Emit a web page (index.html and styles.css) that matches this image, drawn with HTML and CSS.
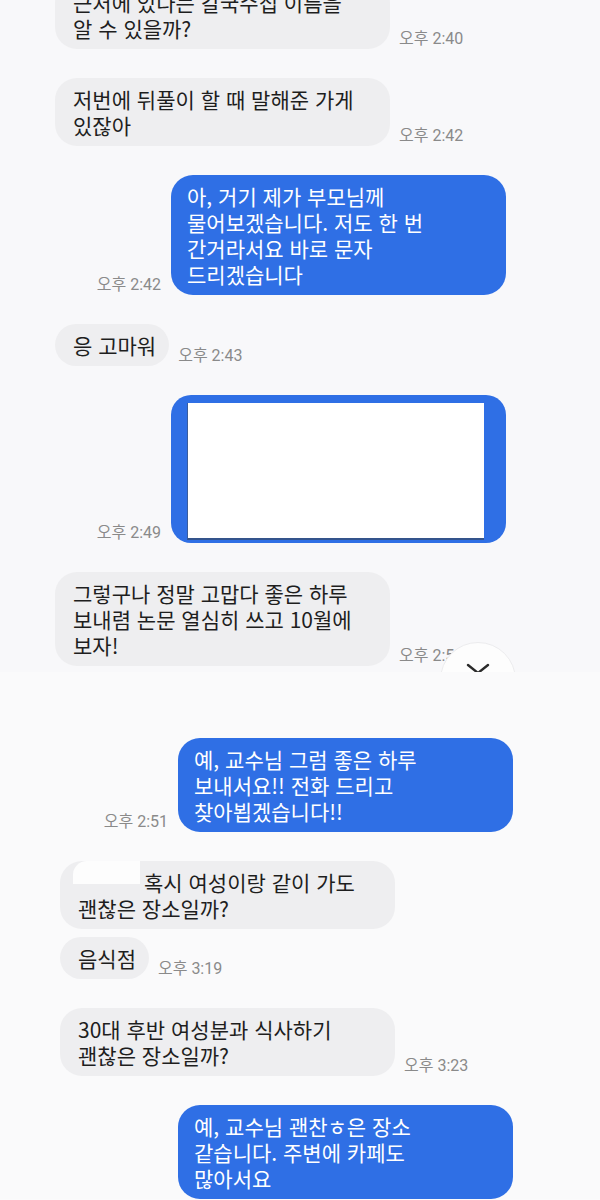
FILE: index.html
```html
<!DOCTYPE html>
<html lang="ko">
<head>
  <meta charset="UTF-8" />
  <meta name="viewport" content="width=device-width, initial-scale=1.0" />
  <title>메시지</title>
  <link rel="stylesheet" href="styles.css">
</head>
<body>
  <div class="screen screen-top">
    <div class="row in first">
      <div class="bubble wide">근처에 있다는 칼국수집 이름을<br>알 수 있을까?</div>
      <span class="time">오후 2:40</span>
    </div>

    <div class="row in">
      <div class="bubble wide">저번에 뒤풀이 할 때 말해준 가게<br>있잖아</div>
      <span class="time">오후 2:42</span>
    </div>

    <div class="row out">
      <span class="time">오후 2:42</span>
      <div class="bubble wide">아, 거기 제가 부모님께<br>물어보겠습니다. 저도 한 번<br>간거라서요 바로 문자<br>드리겠습니다</div>
    </div>

    <div class="row in">
      <div class="bubble">응 고마워</div>
      <span class="time">오후 2:43</span>
    </div>

    <div class="row out">
      <span class="time">오후 2:49</span>
      <div class="bubble wide photo">
        <div class="photo-box"></div>
      </div>
    </div>

    <div class="row in">
      <div class="bubble wide">그렇구나 정말 고맙다 좋은 하루<br>보내렴 논문 열심히 쓰고 10월에<br>보자!</div>
      <span class="time">오후 2:51</span>
    </div>

    <!-- scroll to bottom button, cut by the screenshot edge -->
    <div class="scroll-down">
      <svg width="24" height="12" viewBox="0 0 24 12">
        <polyline points="2,2 12,10 22,2" fill="none" stroke="#2b2b2b" stroke-width="2.4" stroke-linecap="round" stroke-linejoin="round" />
      </svg>
    </div>
  </div>

  <div class="screen screen-bottom">
    <div class="row out">
      <span class="time">오후 2:51</span>
      <div class="bubble wide">예, 교수님 그럼 좋은 하루<br>보내서요!! 전화 드리고<br>찾아뵙겠습니다!!</div>
    </div>

    <div class="row in">
      <div class="bubble wide hidden-name"><span class="redact"></span>혹시 여성이랑 같이 가도<br>괜찮은 장소일까?</div>
    </div>

    <div class="row in cont">
      <div class="bubble">음식점</div>
      <span class="time">오후 3:19</span>
    </div>

    <div class="row in">
      <div class="bubble wide">30대 후반 여성분과 식사하기<br>괜찮은 장소일까?</div>
      <span class="time">오후 3:23</span>
    </div>

    <div class="row out">
      <div class="bubble wide">예, 교수님 괜찬ㅎ은 장소<br>같습니다. 주변에 카페도<br>많아서요</div>
    </div>
  </div>
</body>
</html>
```

FILE: styles.css
```css
body {
  margin: 0;
  background-color: #fbfbfc;
  font-family: "Noto Sans CJK KR", "Noto Sans", sans-serif;
  color: #1e1e1e;
  overflow: hidden;
}

.screen {
  position: relative;
  overflow: hidden;
  display: flex;
  flex-direction: column;
}

.screen-top {
  height: 672px;
  background-color: #f8f8fa;
  padding: 0 94px 0 55px;
  box-sizing: border-box;
}

.screen-bottom {
  background-color: #fafafb;
  padding: 66px 87px 0 60px;
}

.row {
  display: flex;
  align-items: flex-end;
  gap: 9px;
}

.row + .row {
  margin-top: 29px;
}

.row.first {
  margin-top: -19px;
}

.row.cont {
  margin-top: 8px;
}

.row.out {
  justify-content: flex-end;
  gap: 10px;
}

.bubble {
  position: relative;
  flex-shrink: 0;
  padding: 8px 13px 8px 18px;
  border-radius: 22px;
  background-color: #eeeef0;
  font-size: 21px;
  line-height: 26px;
  white-space: nowrap;
}

.bubble.wide {
  width: 335px;
  box-sizing: border-box;
}

.out .bubble {
  background-color: #2f6fe5;
  color: #fff;
  padding: 8px 16px;
}

.time {
  font-family: "Roboto", "Noto Sans CJK KR", sans-serif;
  font-size: 16px;
  line-height: 18px;
  color: #8a8a8a;
  margin-bottom: 1px;
  white-space: nowrap;
}

/* blurred-out picture message */
.out .bubble.photo {
  padding: 8px 22px 3px 16px;
  border-radius: 20px;
}

.photo-box {
  height: 135px;
  background-color: #ffffff;
  border-left: 1px solid #3a5d9c;
  border-bottom: 2px solid #34548c;
}

.hidden-name {
  text-indent: 66px;
}

.redact {
  position: absolute;
  left: 13px;
  top: 0;
  width: 67px;
  height: 23px;
  background-color: #fdfdfd;
  border-radius: 14px 0 0 0;
}

.scroll-down {
  position: absolute;
  left: 440px;
  top: 642px;
  width: 76px;
  height: 76px;
  border-radius: 50%;
  background-color: #fdfdfd;
  border: 1px solid #ececee;
  box-sizing: border-box;
  display: flex;
  justify-content: center;
  padding-top: 20px;
}
```
